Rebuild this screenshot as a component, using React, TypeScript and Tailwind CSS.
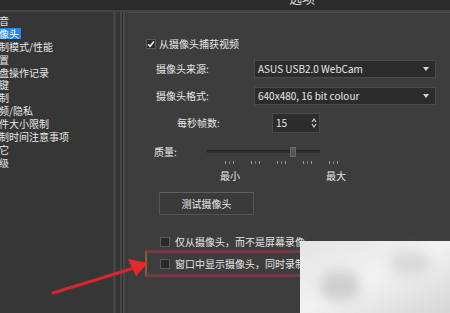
import React from 'react';

const sideItems = [
  '音',
  '像头',
  '制模式/性能',
  '置',
  '盘操作记录',
  '键',
  '制',
  '频/隐私',
  '件大小限制',
  '制时间注意事项',
  '它',
  '级',
];

function CheckBox({ checked }: { checked?: boolean }) {
  return (
    <span className="flex h-[10px] w-[10px] shrink-0 items-center justify-center border border-[#5a5a5a] bg-[#2a2a2a]">
      {checked && (
        <svg width="8" height="8" viewBox="0 0 8 8">
          <path d="M1 4.2 L3.1 6.3 L7 1.6" fill="none" stroke="#f2f2f2" strokeWidth="1.6" />
        </svg>
      )}
    </span>
  );
}

function Dropdown({ value }: { value: string }) {
  return (
    <div className="flex h-[18px] w-[182px] items-center justify-between border border-[#4a4a4a] bg-[#2c2c2c] pl-[3px] pr-[6px]">
      <span className="text-[10px] leading-none text-[#e8e8e8]">{value}</span>
      <svg width="6" height="4" viewBox="0 0 6 4">
        <path d="M0 0 H6 L3 4 Z" fill="#d8d8d8" />
      </svg>
    </div>
  );
}

export default function App() {
  return (
    <div
      className="relative flex h-[313px] w-[450px] flex-col overflow-hidden bg-[#3d3d3d] text-[#e6e6e6]"
      style={{ fontFamily: '"Noto Sans CJK SC", "Noto Sans", sans-serif' }}
    >
      {/* title bar, clipped at the top */}
      <div className="flex h-[10px] shrink-0 overflow-hidden bg-[#2c2c2c] pl-[289px]">
        <span className="-mt-[10px] text-[13px] leading-[15px] text-[#dcdcdc]">选项</span>
      </div>
      <div className="h-[2px] shrink-0 bg-[#454545]" />

      <div className="flex flex-1">
        {/* sidebar */}
        <div className="w-[113px] shrink-0 overflow-hidden bg-[#363636] pt-[2px]">
          {sideItems.map((t, i) => (
            <div key={t + i} className="flex h-[12.9px] items-center overflow-hidden">
              <span
                className={
                  '-ml-[3px] whitespace-nowrap px-[2px] text-[10px] leading-[11px] ' +
                  (i === 1 ? 'bg-[#2b86e6] text-white' : 'text-[#e6e6e6]')
                }
              >
                {t}
              </span>
            </div>
          ))}
        </div>

        {/* splitter */}
        <div className="flex w-[15px] shrink-0 bg-[#393939]">
          <div className="w-[3px] bg-[#444444]" />
          <div className="w-[4px] bg-[#353535]" />
          <div className="w-[2px] bg-[#474747]" />
          <div className="w-[1px] bg-[#2f2f2f]" />
          <div className="w-[2px] bg-[#474747]" />
          <div className="w-[3px] bg-[#3a3a3a]" />
        </div>

        {/* main panel */}
        <div className="flex flex-1 flex-col border-t border-[#4a4a4a] pl-[18px] text-[10px] leading-none">
          <div className="mt-[26px] flex items-center gap-[3px]">
            <CheckBox checked />
            <span>从摄像头捕获视频</span>
          </div>

          <div className="mt-[11px] flex items-center">
            <span className="w-[108px] pl-[10px]">摄像头来源:</span>
            <Dropdown value="ASUS USB2.0 WebCam" />
          </div>

          <div className="mt-[9px] flex items-center">
            <span className="w-[108px] pl-[10px]">摄像头格式:</span>
            <Dropdown value="640x480, 16 bit colour" />
          </div>

          <div className="mt-[8px] flex items-center">
            <span className="w-[126px] pl-[31px]">每秒帧数:</span>
            <div className="flex h-[20px] w-[48px] items-center justify-between border border-[#4a4a4a] bg-[#2c2c2c] pl-[3px] pr-[2px]">
              <span>15</span>
              <svg width="6" height="12" viewBox="0 0 6 12">
                <path d="M1 5 L3 2 L5 5" fill="none" stroke="#d0d0d0" strokeWidth="1.2" />
                <path d="M1 7 L3 10 L5 7" fill="none" stroke="#d0d0d0" strokeWidth="1.2" />
              </svg>
            </div>
          </div>

          <div className="mt-[14px] flex items-center">
            <span className="w-[61px] pl-[8px]">质量:</span>
            <div className="relative h-[10px] w-[113px]">
              <div className="absolute left-0 right-0 top-[3px] h-[3px] border-t border-[#252525] bg-[#2e2e2e]" />
              <div className="absolute left-[83px] top-0 h-[10px] w-[6px] border border-[#6a6a6a] bg-[#555555]" />
            </div>
          </div>
          <div className="ml-[79px] mt-[4px] flex w-[113px] justify-between">
            {[0, 1, 2, 3, 4].map((g) => (
              <div key={g} className="flex gap-[3px]">
                <span className="h-[3px] w-[1px] bg-[#9a9a9a]" />
                <span className="h-[3px] w-[1px] bg-[#7a7a7a]" />
                <span className="h-[3px] w-[1px] bg-[#9a9a9a]" />
              </div>
            ))}
          </div>
          <div className="ml-[74px] mt-[7px] flex w-[126px] justify-between">
            <span>最小</span>
            <span>最大</span>
          </div>

          <button className="ml-[13px] mt-[11px] flex h-[23px] w-[95px] items-center justify-center border border-[#555555] border-t-[#5e5e5e] bg-[#3a3a3a] text-[10px] text-[#ececec]">
            测试摄像头
          </button>

          <div className="ml-[14px] mt-[22px] flex items-center gap-[5px]">
            <CheckBox />
            <span className="whitespace-nowrap">仅从摄像头，而不是屏幕录像</span>
          </div>

          <div className="-ml-[1px] mt-[3px] flex h-[27px] items-center border-y-[3px] border-l-[2px] border-[#6e3a48] border-l-[#8a5a3a] pl-[13px]">
            <div className="flex items-center gap-[5px]">
              <CheckBox />
              <span className="whitespace-nowrap">窗口中显示摄像头，同时录制</span>
            </div>
          </div>
        </div>
      </div>

      {/* blurred watermark patch */}
      <div className="absolute left-[300px] top-[241px] h-[72px] w-[150px] bg-gradient-to-br from-[#e4e4e4] via-[#f2f2f2] to-[#d6d6d6] blur-[0.5px]">
        <div className="absolute left-[20px] top-[30px] h-[30px] w-[40px] rounded-full bg-[#cfcfcf] blur-[6px]" />
        <div className="absolute left-[90px] top-[10px] h-[25px] w-[40px] rounded-full bg-[#dadada] blur-[6px]" />
      </div>

      {/* red arrow */}
      <svg className="absolute left-0 top-0" width="450" height="313" viewBox="0 0 450 313">
        <path d="M53 293 L134 268" stroke="#d8262c" strokeWidth="3" strokeLinecap="round" />
        <path d="M148 263 L128 259 L136 276 Z" fill="#e8282e" />
      </svg>
    </div>
  );
}
